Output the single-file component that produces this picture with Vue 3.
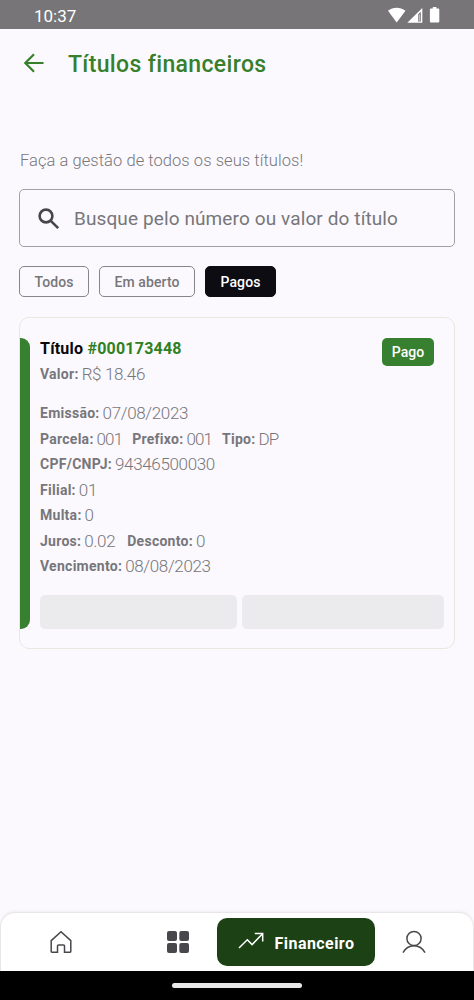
<template>
  <div class="screen">
    <div class="status-bar">
      <span class="clock">10:37</span>
      <svg class="status-icons" width="54" height="18" viewBox="0 0 54 18">
        <path d="M1 3.800C6-.3 13-.3 18.500 3.800L9.700 15.400z" fill="#fff" />
        <path d="M20.300 15.800L35.300 1.100v14.700z" fill="#fff" />
        <path d="M31 7.500l2.800-2.700v9.800H31z" fill="#777578" />
        <path d="M32.200 7.500v6.400" stroke="#fff" stroke-width=".8" />
        <path d="M45.800 0h3.600v1.400h1.900q1 0 1 1v12.200q0 1-1 1h-7.400q-1 0-1-1V2.400q0-1 1-1h1.900z" fill="#fff" />
      </svg>
    </div>

    <header class="header">
      <svg class="back" width="20" height="20" viewBox="0 0 20 20">
        <path d="M19.500 10H1.500M10 1.300L1.300 10l8.700 8.700" />
      </svg>
      <h1>Títulos financeiros</h1>
    </header>

    <main class="content">
      <p class="subtitle">Faça a gestão de todos os seus títulos!</p>

      <div class="search">
        <svg width="22" height="22" viewBox="0 0 22 22">
          <circle cx="8" cy="8" r="6.400" />
          <path d="M12.800 12.800l7.400 7.400" />
        </svg>
        <span>Busque pelo número ou valor do título</span>
      </div>

      <div class="filters">
        <button
          v-for="filter in filters"
          :key="filter.id"
          :class="['filter', filter.id, { active: selected === filter.id }]"
          @click="selected = filter.id"
        >
          {{ filter.label }}
        </button>
      </div>

      <article class="card">
        <div class="accent"></div>
        <div class="card-body">
          <div class="card-head">
            <h2>Título <span>#000173448</span></h2>
            <span class="badge">Pago</span>
          </div>
          <div
            v-for="(row, index) in rows"
            :key="index"
            :class="['row', { compact: row.length > 2 }]"
          >
            <span v-for="item in row" :key="item.label" class="item">
              <b>{{ item.label }}:</b>
              <span class="value">{{ item.value }}</span>
            </span>
          </div>
          <div class="actions">
            <div class="action"></div>
            <div class="action"></div>
          </div>
        </div>
      </article>
    </main>

    <nav class="tabs">
      <a class="tab home">
        <svg width="24" height="24" viewBox="0 0 24 24">
          <path d="M2.200 10.600L12 1.800l9.800 8.800v10.900q0 .7-.7.7h-5.600v-6.200q0-1-1-1h-5q-1 0-1 1v6.200H2.900q-.7 0-.7-.7z" />
        </svg>
      </a>
      <a class="tab grid">
        <svg width="22" height="22" viewBox="0 0 22 22">
          <rect x="0" y="0" width="10" height="10" rx="2" />
          <rect x="12.300" y="0" width="9.700" height="10" rx="2" />
          <rect x="0" y="12" width="10" height="10" rx="2" />
          <rect x="12.300" y="12" width="9.700" height="10" rx="2" />
        </svg>
      </a>
      <a class="tab current">
        <svg width="26" height="18" viewBox="0 0 26 18">
          <path d="M1 16l8.300-8.300 4.800 4.900L24.300 2M16.800 1.500h7.900v7.900" />
        </svg>
        <span>Financeiro</span>
      </a>
      <a class="tab profile">
        <svg width="24" height="24" viewBox="0 0 24 24">
          <circle cx="12" cy="8.500" r="7.100" />
          <path d="M1 22.700c2.300-4.300 6.300-6.900 11-6.900s8.700 2.600 11 6.900" />
        </svg>
      </a>
    </nav>

    <div class="system-nav">
      <div class="handle"></div>
    </div>
  </div>
</template>

<script setup>
import { ref } from 'vue'

const selected = ref('pagos')

const filters = [
  { id: 'todos', label: 'Todos' },
  { id: 'aberto', label: 'Em aberto' },
  { id: 'pagos', label: 'Pagos' }
]

const rows = [
  [{ label: 'Valor', value: 'R$ 18.46' }],
  [{ label: 'Emissão', value: '07/08/2023' }],
  [
    { label: 'Parcela', value: '001' },
    { label: 'Prefixo', value: '001' },
    { label: 'Tipo', value: 'DP' }
  ],
  [{ label: 'CPF/CNPJ', value: '94346500030' }],
  [{ label: 'Filial', value: '01' }],
  [{ label: 'Multa', value: '0' }],
  [
    { label: 'Juros', value: '0.02' },
    { label: 'Desconto', value: '0' }
  ],
  [{ label: 'Vencimento', value: '08/08/2023' }]
]
</script>

<style>
body {
  margin: 0;
}
</style>

<style scoped>
* {
  box-sizing: border-box;
}
.screen {
  display: flex;
  flex-direction: column;
  width: 474px;
  height: 1000px;
  background: #fbf9fe;
  font-family: Roboto, sans-serif;
  color: #77767a;
  overflow: hidden;
}
svg {
  display: block;
  flex: none;
}
.status-bar {
  display: flex;
  justify-content: space-between;
  height: 29px;
  padding: 7px 33px 0 34px;
  background: #777578;
}
.clock {
  color: #fff;
  font-size: 17px;
  line-height: 19px;
}
.header {
  display: flex;
  align-items: center;
  height: 67px;
  padding: 0 24px;
}
.back {
  fill: none;
  stroke: #367f2b;
  stroke-width: 2.2;
}
h1 {
  margin: 3px 0 0 24px;
  color: #367f2b;
  font-size: 23px;
  font-weight: 500;
  letter-spacing: 0.35px;
}
.content {
  flex: 1;
  padding: 53px 19px 0;
}
.subtitle {
  margin: 0;
  height: 40px;
  padding-left: 1px;
  font-size: 16.5px;
  line-height: 24px;
  font-weight: 300;
  letter-spacing: 0.06px;
}
.search {
  display: flex;
  align-items: center;
  height: 58px;
  padding-left: 18px;
  border: 1px solid #a3a1a6;
  border-radius: 5px;
  font-size: 19px;
  letter-spacing: 0.11px;
}
.search svg {
  margin: 1px 14px 0 0;
  fill: none;
  stroke: #48464b;
  stroke-width: 2.6;
}
.filters {
  display: flex;
  gap: 10px;
  margin-top: 19px;
}
.filter {
  height: 31px;
  padding: 0;
  border: 1px solid #87858a;
  border-radius: 5px;
  background: transparent;
  color: #77767a;
  font-family: inherit;
  font-size: 14px;
  font-weight: 500;
  line-height: 31px;
  letter-spacing: 0.1px;
}
.todos {
  width: 70px;
}
.aberto {
  width: 96px;
}
.pagos {
  width: 71px;
}
.filter.active {
  border-color: #0d0c12;
  background: #0d0c12;
  color: #fff;
}
.card {
  display: flex;
  height: 332px;
  margin-top: 20px;
  padding: 20px 10px 19px 0;
  border: 1px solid #e9e8df;
  border-radius: 10px;
}
.accent {
  width: 10px;
  height: 291px;
  border-radius: 0 9px 9px 0;
  background: #378030;
}
.card-body {
  flex: 1;
  padding-left: 10px;
}
.card-head {
  display: flex;
  justify-content: space-between;
  height: 23.5px;
  padding-right: 10px;
}
h2 {
  margin: 0;
  color: #08070b;
  font-size: 16px;
  line-height: 22px;
  font-weight: 700;
  letter-spacing: 0.22px;
}
h2 span {
  color: #2f8023;
}
.badge {
  width: 52px;
  height: 28px;
  border-radius: 5px;
  background: #378030;
  color: #fff;
  font-size: 14px;
  line-height: 29px;
  font-weight: 500;
  text-align: center;
}
.row {
  display: flex;
  gap: 12px;
  height: 25.5px;
  line-height: 25.5px;
}
.row:nth-child(2) {
  margin-bottom: 14px;
}
.item {
  display: flex;
  gap: 3px;
}
.item b {
  font-size: 14px;
  font-weight: 700;
  letter-spacing: 0.27px;
}
.value {
  font-size: 17px;
  font-weight: 300;
  letter-spacing: -0.35px;
}
.compact {
  gap: 10px;
}
.compact .value {
  letter-spacing: -0.9px;
}
.actions {
  display: grid;
  grid-template-columns: 197px 202px;
  gap: 5px;
  margin-top: 15.5px;
}
.action {
  height: 34px;
  border-radius: 5px;
  background: #ebeaed;
}
.tabs {
  display: flex;
  align-items: center;
  height: 59px;
  border: 1px solid #e8e6e6;
  border-bottom: 0;
  border-radius: 15px 15px 0 0;
  background: #fff;
  box-shadow: 0 -1px 3px #0000000d;
}
.tab {
  display: flex;
  flex: none;
  align-items: center;
  justify-content: center;
  width: 118px;
  height: 48px;
}
.tab svg {
  fill: none;
  stroke: #48474b;
  stroke-width: 1.5;
}
.home {
  padding-left: 1px;
}
.grid {
  width: 98px;
  padding-left: 19px;
}
.grid svg {
  fill: #48474b;
  stroke: none;
}
.current {
  gap: 11px;
  width: 158px;
  border-radius: 10px;
  background: #1b4114;
  color: #fff;
  font-size: 16px;
  font-weight: 700;
  letter-spacing: 0.45px;
}
.tab.current svg {
  margin-top: -3px;
  stroke: #fff;
}
.current span {
  padding-top: 2px;
}
.profile {
  width: 78px;
}
.system-nav {
  display: flex;
  justify-content: center;
  height: 29px;
  padding-top: 12px;
  background: #000;
}
.handle {
  width: 130px;
  height: 5px;
  border-radius: 3px;
  background: #e9e8e9;
}
</style>
